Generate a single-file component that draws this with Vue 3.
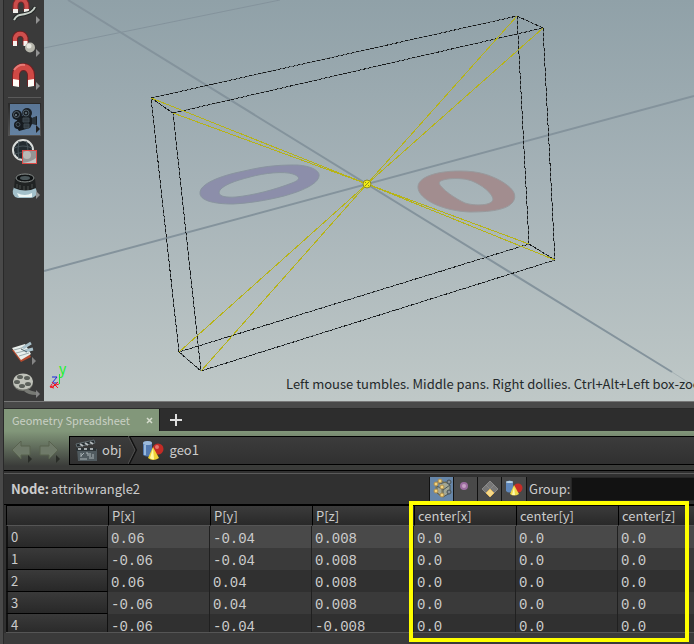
<script setup>
import { ref } from 'vue'

const columns = ['P[x]', 'P[y]', 'P[z]', 'center[x]', 'center[y]', 'center[z]']
const rows = [
  ['0.06', '-0.04', '0.008', '0.0', '0.0', '0.0'],
  ['-0.06', '-0.04', '0.008', '0.0', '0.0', '0.0'],
  ['0.06', '0.04', '0.008', '0.0', '0.0', '0.0'],
  ['-0.06', '0.04', '0.008', '0.0', '0.0', '0.0'],
  ['-0.06', '-0.04', '-0.008', '0.0', '0.0', '0.0'],
]
const group = ref('')

// Projected corners of the bounding box: back face, then front face
const back = [[107, 98], [473, 16], [485, 244], [135, 352]]
const front = [[129, 113], [499, 28], [511, 260], [157, 371]]
const center = [323, 184]
const corners = [...back, ...front]
const outline = (face) => face.map((p) => p.join(',')).join(' ')
</script>

<template>
  <div class="app">
    <div class="edge" aria-hidden="true"></div>
    <div class="workspace">
      <section class="scene">
        <nav class="toolbar" aria-label="View tools">
          <button class="tool cropped" type="button" aria-label="Snap to curve">
            <svg viewBox="0 6 40 27" width="40" height="27">
              <path d="M11.500 17V12a5 6 0 0 1 11 0V17" fill="none" stroke="#7d2427" stroke-width="6" />
              <path d="M11.500 16V12a5 6 0 0 1 11 0V16" fill="none" stroke="#cb4d4b" stroke-width="4" />
              <path d="M9 15h5v4H9zM20 15h5v4h-5z" fill="#f2efeb" />
              <path d="M10 26C13 20 17 21 21 20S29 18 31 13" fill="none" stroke="#242827" stroke-width="4" />
              <path d="M10 26C13 20 17 21 21 20S29 18 31 13" fill="none" stroke="#c9d1c9" stroke-width="2" />
              <path d="M32 22l4 4-4 4z" fill="#929292" />
            </svg>
          </button>
          <button class="tool" type="button" aria-label="Snap to point">
            <svg viewBox="0 0 40 33" width="40" height="33">
              <path d="M11 18V11a5.500 6 0 0 1 10.500 0V18" fill="none" stroke="#6f2023" stroke-width="6" />
              <path d="M11 18V11a5.500 6 0 0 1 10.500 0V18" fill="none" stroke="#cf4f4d" stroke-width="4" />
              <path d="M9 14h4v5h-4zM19.500 14h4v5h-4z" fill="#f6f2ee" />
              <circle cx="26" cy="20.500" r="5" fill="#b5b5ab" /><circle cx="25" cy="19" r="2.500" fill="#e6e6dd" />
              <path d="M32 22l4 4-4 4z" fill="#929292" />
            </svg>
          </button>
          <button class="tool" type="button" aria-label="Snapping">
            <svg viewBox="0 0 40 33" width="40" height="33">
              <path d="M12 26V15a7.500 8 0 0 1 15 0V26" fill="none" stroke="#6f2023" stroke-width="8" />
              <path d="M12 25V15a7.500 8 0 0 1 15 0V25" fill="none" stroke="#cf4945" stroke-width="6" />
              <path d="M10 10Q14 4 21 5" fill="none" stroke="#e67b76" stroke-width="2" />
              <path d="M9 19l6 1v7l-6-1zM24 20l6-1v7l-6 1z" fill="#fffdf8" />
              <path d="M32 22l4 4-4 4z" fill="#929292" />
            </svg>
          </button>
          <hr class="rule" />
          <button class="tool active" type="button" aria-label="View">
            <svg viewBox="0 0 40 33" width="40" height="33">
              <path d="M15 13l11-1 2 3 5-2v9l-5-1-2 4-11 3-4-6z" fill="#171c20" />
              <circle cx="13" cy="12" r="5" fill="#151b20" /><circle cx="23" cy="10" r="5" fill="#1b2126" />
              <circle cx="14" cy="22" r="4" fill="#161b20" />
              <circle cx="12.500" cy="11.500" r="3" fill="none" stroke="#57636c" />
              <circle cx="22" cy="10" r="3" fill="none" stroke="#4d5c66" />
              <circle cx="14" cy="21.500" r="2" fill="none" stroke="#46545d" />
              <circle cx="12" cy="12" r="1" fill="#7b8d97" /><circle cx="22" cy="10" r="1" fill="#6b7d87" />
              <path d="M19 15h6v4h-6zM20 21h5v4h-5z" fill="#333c43" stroke="#3e4b53" />
              <path d="M29 15v6M31 14v7" stroke="#3d4b54" />
              <path d="M32 22l4 4-4 4z" fill="#202020" />
            </svg>
          </button>
          <button class="tool" type="button" aria-label="Region zoom">
            <svg viewBox="0 0 40 33" width="40" height="33">
              <circle cx="19" cy="14" r="10" fill="#232c31" stroke="#d9dcda" stroke-width="2" />
              <path d="M10 12q9-4 18 0M10 18q8-3 15 0M15 5q-2 9 0 18M22 5q2 5 2 10" fill="none" stroke="#48545a" />
              <rect x="18.500" y="14.500" width="14" height="13" fill="#939494" stroke="#dc4b47" />
              <path d="M19 27q8-1 13-5v5z" fill="#c4c6c5" /><circle cx="23" cy="19" r="4" fill="#b8b8b5" />
            </svg>
          </button>
          <button class="tool" type="button" aria-label="Lens">
            <svg viewBox="0 0 40 33" width="40" height="33">
              <path d="M10 18Q6 27 14 29H27Q36 27 31 18z" fill="#a3c0ca" />
              <path d="M13 24q8 4 15 0v4H15z" fill="#edf6f5" />
              <path d="M11 10q0-5 10-5t10 5l1 9q-10 5-22 0z" fill="#202323" />
              <path d="M13 15v4M16 16v4M20 17v4M24 17v4M28 15v4" stroke="#4b504e" />
              <ellipse cx="21" cy="9" rx="9" ry="4" fill="#101314" stroke="#8b918f" />
              <ellipse cx="21" cy="9" rx="5" ry="2" fill="#4a5659" />
              <path d="M32 22l4 4-4 4z" fill="#929292" />
            </svg>
          </button>
          <span class="spacer"></span>
          <button class="tool" type="button" aria-label="Render">
            <svg viewBox="0 0 40 33" width="40" height="33">
              <path d="M8 15l13-4 6 11-10 5z" fill="#b64b2f" />
              <path d="M8 13l13-4 6 10-10 6z" fill="#e9efec" />
              <path d="M10 15l11-3M12 18l12-3M15 21l10-3" stroke="#9eacae" />
              <path d="M19 13l8-5M21 16l8-2" stroke="#a9c1ca" stroke-width="3" />
              <path d="M17 14l6 3" stroke="#4c6069" />
              <path d="M28 22l4 4-4 4z" fill="#858585" />
            </svg>
          </button>
          <button class="tool" type="button" aria-label="Flipbook">
            <svg viewBox="0 0 40 33" width="40" height="33">
              <path d="M23 21q4 2 9 3v3q-8 0-12-4z" fill="#777974" />
              <ellipse cx="19" cy="15" rx="10" ry="8" fill="#74766f" />
              <ellipse cx="19" cy="13.500" rx="10" ry="8" fill="#c0c2ba" />
              <g fill="#5c605b"><ellipse cx="16" cy="9" rx="3" ry="2" /><ellipse cx="23" cy="10" rx="3" ry="2" /><ellipse cx="13" cy="14" rx="3" ry="2" /><ellipse cx="24" cy="16" rx="3" ry="2" /><ellipse cx="18" cy="18" rx="3" ry="2" /></g>
              <path d="M32 22l4 4-4 4z" fill="#858585" />
            </svg>
          </button>
        </nav>

        <div class="viewport">
          <svg class="view" viewBox="0 0 650 401" preserveAspectRatio="xMidYMid slice" role="img" aria-label="Bounding box in the scene view">
            <g fill="none" stroke="#84939c">
              <path d="M0 48L236 0" stroke-width="1" />
              <path d="M0 271L650 96M24 0L628 372" stroke-width="2" />
              <path d="M628 372L650 386" stroke-width="1" opacity=".4" />
            </g>
            <path d="M156 193C156 184 175 176 200 171C225 165 240 165 253 165C268 166 276 171 275 176C274 184 258 191 240 196C220 201 205 203 189 204C168 204 156 200 156 193ZM176 190C180 185 190 181 206 177C220 173 240 171 249 174C257 177 256 180 248 183C230 190 210 195 192 197C178 198 173 195 176 190Z" fill="#8c8eaa" stroke="#89949f" fill-rule="evenodd" />
            <path d="M374 188C373 178 390 171 416 171C435 171 446 175 457 181C467 187 473 193 470 200C466 209 450 212 426 212C398 211 375 199 374 188ZM395 183C396 178 418 177 428 181C438 185 448 193 449 199C449 206 430 206 421 203C412 199 397 189 395 183Z" fill="#a28d8f" stroke="#98999c" fill-rule="evenodd" />
            <g v-for="tone in ['halo', 'dash']" :key="tone" class="wire" :class="tone">
              <polygon :points="outline(back)" />
              <polygon :points="outline(front)" />
              <line v-for="(p, i) in back" :key="i" :x1="p[0]" :y1="p[1]" :x2="front[i][0]" :y2="front[i][1]" />
            </g>
            <g class="wire" stroke="#b6b317">
              <line v-for="(p, i) in corners" :key="i" :x1="center[0]" :y1="center[1]" :x2="p[0]" :y2="p[1]" />
            </g>
            <circle cx="323" cy="184" r="4" fill="#f2ec12" stroke="#8b8a26" />
            <path d="M321 186l4-4M321 182l1 1M324 185l1 1" stroke="#8b8a26" />
          </svg>
          <svg class="axes" viewBox="0 0 30 36" width="30" height="36" aria-label="Axes">
            <path d="M12.500 31V21" stroke="#18e33b" fill="none" />
            <path d="M5 24h5l-5 6h5" stroke="#1720dc" fill="none" />
            <path d="M12 31L3 34M5 29l6 6M11 29l-6 6M5 31l-2 3 4 1" stroke="#f01723" fill="none" />
            <text x="12" y="21" fill="#18f229">y</text>
          </svg>
          <p class="hint">Left mouse tumbles. Middle pans. Right dollies. Ctrl+Alt+Left box-zooms.</p>
        </div>
      </section>

      <div class="splitter"></div>

      <section class="pane">
        <div class="tabs">
          <div class="tab">
            <button class="tab-name" type="button">Geometry Spreadsheet</button>
            <button class="close" type="button" aria-label="Close tab">
              <svg viewBox="0 0 7 7" width="7" height="7"><path d="M1 1l5 5M6 1L1 6" stroke="#d5dccd" stroke-width="1.500" /></svg>
            </button>
          </div>
          <button class="add" type="button" aria-label="New tab">
            <svg viewBox="0 0 12 12" width="12" height="12"><path d="M6 0v12M0 6h12" stroke="#dedede" stroke-width="2" /></svg>
          </button>
        </div>

        <div class="pathbar">
          <button class="history" type="button" aria-label="Back">
            <svg viewBox="0 0 24 26" width="24" height="26"><path d="M4 13L13 4v5h9v9h-9v4z" fill="#6f7a69" stroke="#59634f" /><path d="M20 18l4 4-4 4z" fill="#292c27" /></svg>
          </button>
          <button class="history" type="button" aria-label="Forward">
            <svg viewBox="0 0 24 26" width="24" height="26"><path d="M20 13L11 4v5H2v9h9v4z" fill="#6f7a69" stroke="#59634f" /><path d="M18 18l4 4-4 4z" fill="#292c27" /></svg>
          </button>
          <div class="path">
            <button class="crumb" type="button">
              <svg viewBox="0 0 24 24" width="24" height="24">
                <path d="M3 11h20v12H4z" fill="#505a5f" />
                <path d="M2 6l18-4 1 3-18 4z" fill="#242a2d" stroke="#616c70" />
                <path d="M6 6l3 2M11 5l3 2M16 4l3 2" stroke="#b3b9bb" stroke-width="2" />
                <path d="M2 10h20v3H2z" fill="#2c3336" />
                <path d="M4 11h3M10 11h3M16 11h3" stroke="#a4abad" stroke-width="2" />
                <path d="M7 15v4M10 15l-3 3M12 15h2v3M16 15v4M19 16v3M6 21h7M15 20h5" stroke="#aab3b6" fill="none" />
              </svg>
              <span>obj</span>
            </button>
            <svg class="divider" viewBox="0 0 10 28" width="10" height="28"><path d="M1 0l7 14-7 14" fill="none" stroke="#111" stroke-width="2" /><path d="M0 0l7 14-7 14" fill="none" stroke="#555" /></svg>
            <button class="crumb" type="button">
              <svg viewBox="0 0 24 24" width="24" height="24">
                <path d="M1 5q5-4 9 0v12q-4 3-9 0z" fill="#5279b0" /><ellipse cx="5.500" cy="5" rx="4.500" ry="2" fill="#9cbbdc" /><path d="M3 7v10" stroke="#98b9dc" stroke-width="2" />
                <circle cx="16" cy="11" r="5.500" fill="#c32b25" /><circle cx="15" cy="9" r="2" fill="#e4776d" />
                <path d="M11 9l6 11q-6 4-11 0z" fill="#efd337" /><path d="M11 10L8 20q2 2 4 1z" fill="#fff8a0" />
              </svg>
              <span>geo1</span>
            </button>
          </div>
        </div>

        <div class="sheet">
          <div class="node">
            <p class="name"><strong>Node:</strong><span>attribwrangle2</span></p>
            <div class="classes" role="group" aria-label="Attribute class">
              <button class="class on" type="button" aria-label="Points">
                <svg viewBox="0 0 24 24" width="24" height="24">
                  <path d="M9 7l7-2 4 3v8l-7 4-6-4V9l6 4v7M13 13l7-5" fill="#a1a696" stroke="#4b5657" />
                  <path d="M5 6l5-2 7 2M6 14l5 6M6 6v8M12 13v6" stroke="#79724f" fill="none" />
                  <g fill="#f3d37c" stroke="#ad8d4d"><circle cx="10" cy="4" r="2" /><circle cx="6" cy="7" r="2" /><circle cx="12" cy="10" r="2" /><circle cx="6" cy="14" r="2" /><circle cx="12" cy="18" r="2" /></g>
                  <g fill="#899298" stroke="#454f54"><circle cx="19" cy="5" r="2" /><circle cx="19" cy="15" r="2" /></g>
                </svg>
              </button>
              <button class="class" type="button" aria-label="Vertices">
                <svg viewBox="0 0 24 24" width="24" height="24"><circle cx="10" cy="9" r="3" fill="#c5a1c4" stroke="#9c6da0" stroke-width="2" /></svg>
              </button>
              <button class="class" type="button" aria-label="Primitives">
                <svg viewBox="0 0 24 24" width="24" height="24"><path d="M12 4l4 4-4 4-4-4z" fill="#777" stroke="#888" /><path d="M8 8l4 4-4 4-4-4zM16 8l4 4-4 4-4-4z" fill="#777" stroke="#888" /><path d="M12 12l4 4-4 4-4-4z" fill="#f6d989" stroke="#e5bc60" /></svg>
              </button>
              <button class="class" type="button" aria-label="Detail">
                <svg viewBox="0 0 24 24" width="24" height="24"><path d="M4 5q4-3 7 0v9q-4 3-7 0z" fill="#6088bc" /><ellipse cx="7.500" cy="5" rx="3.500" ry="1" fill="#bad3e5" /><circle cx="16" cy="11" r="4.500" fill="#c82c26" /><path d="M12 8l5 9q-5 3-9 0z" fill="#efd948" /><path d="M12 10l-2 8h3z" fill="#fffbae" /></svg>
              </button>
            </div>
            <label class="group-label" for="group">Group:</label>
            <input id="group" v-model="group" class="group" type="text" />
          </div>

          <div class="grid">
            <table>
              <thead>
                <tr><td class="corner"></td><th v-for="c in columns" :key="c" scope="col">{{ c }}</th></tr>
              </thead>
              <tbody>
                <tr v-for="(r, i) in rows" :key="i">
                  <th scope="row">{{ i }}</th>
                  <td v-for="(v, j) in r" :key="j">{{ v }}</td>
                </tr>
              </tbody>
            </table>
          </div>
          <div class="marker" aria-hidden="true"></div>
        </div>
        <div class="scrollbar"></div>
      </section>
    </div>
  </div>
</template>

<style>
body { margin: 0; background: #303030; }
</style>

<style scoped>
* { box-sizing: border-box; }
.app {
  display: flex;
  height: 100vh;
  min-height: 480px;
  overflow: hidden;
  background: #303030;
  color: #ccc;
  font: 13px/20px "Noto Sans CJK SC", "Noto Sans", sans-serif;
}
button { display: block; margin: 0; padding: 0; border: 0; background: none; color: inherit; font: inherit; }
svg { display: block; flex: none; }
p { margin: 0; }
.edge { flex: none; width: 4px; background: #494949; border-right: 1px solid #292929; }
.workspace { flex: 1; min-width: 0; display: flex; flex-direction: column; }

.scene { flex: 1; min-height: 0; display: flex; }
.toolbar { flex: none; width: 40px; display: flex; flex-direction: column; background: #3a3a3a; overflow: hidden; }
.tool { flex: none; width: 40px; height: 33px; }
.tool.cropped { height: 27px; }
.tool.active {
  background: linear-gradient(#5a7696, #6482a2) 6px 1px / 30px 31px no-repeat, linear-gradient(#292929, #555) 4px 0 / 33px 33px no-repeat;
}
.rule { flex: none; width: 33px; height: 1px; margin: 4px 0 5px 4px; border: 0; background: #5a5a5a; }
.spacer { flex: 1; }
.viewport {
  position: relative;
  flex: 1;
  min-width: 0;
  overflow: hidden;
  background: linear-gradient(#90a1a8, #a5b2b7 45%, #bfc8c7);
}
.view { width: 100%; height: 100%; }
.wire { fill: none; stroke-width: 1px; shape-rendering: crispEdges; }
.wire.halo { stroke: #657075; }
.wire.dash { stroke: #16191a; stroke-dasharray: 3 2; }
.axes { position: absolute; left: 3px; bottom: 12px; }
.axes text { font: 14px "Noto Sans CJK SC", sans-serif; }
.hint {
  position: absolute;
  left: 242px;
  bottom: 7px;
  color: #24292a;
  white-space: nowrap;
}

.splitter { flex: none; height: 8px; background: #494949; border-top: 1px solid #777; border-bottom: 1px solid #292929; }

.pane { flex: none; background: #303030; }
.tabs { display: flex; height: 22px; background: #2d2d2d; }
.tab { display: flex; align-items: center; justify-content: space-between; width: 155px; padding: 0 6px 0 8px; background: #82977a; }
.tab-name { color: #c9d0c4; font-size: 11px; }
.add { display: flex; align-items: center; padding-left: 10px; border-left: 1px solid #1b1b1b; }
.pathbar {
  display: flex;
  align-items: center;
  height: 40px;
  padding: 5px 0 6px 4px;
  gap: 6px;
  background: linear-gradient(#82977a, #3a3b39 90%);
  border-bottom: 1px solid #000;
}
.path {
  flex: 1;
  display: flex;
  align-items: center;
  height: 29px;
  margin-left: 1px;
  background: linear-gradient(#3c3c3c, #303030);
  border: 1px solid #000;
  border-right: 0;
}
.crumb { display: flex; align-items: center; gap: 4px; padding: 0 4px; }
.divider { margin-left: 2px; }

.sheet { position: relative; margin-top: 2px; border-top: 1px solid #5a5a5a; }
.node { display: flex; align-items: center; height: 31px; padding-left: 7px; border-bottom: 1px solid #000; background: #303030; }
.name { display: flex; gap: 2px; flex: 0 1 418px; min-width: 140px; }
strong { font-weight: 700; }
.classes { display: flex; border: solid #111; border-width: 0 1px; }
.class { width: 24px; height: 24px; background: #494949; border-right: 1px solid #111; }
.class:last-child { border-right: 0; }
.class.on { background: #6786a8; }
.group-label { margin: 0 1px 0 2px; }
.group { flex: 1; min-width: 40px; height: 24px; padding: 0 4px; border: 1px solid #262626; border-right: 0; background: #121212; color: #ccc; font: inherit; }
.grid { height: 128px; margin-left: 2px; overflow: hidden; border-top: 1px solid #000; border-bottom: 1px solid #555; }
table { width: 714px; border-collapse: separate; border-spacing: 0; table-layout: fixed; }
th, td { height: 22px; padding: 0 3px; text-align: left; font-weight: 400; line-height: 18px; white-space: nowrap; }
thead th, .corner { height: 20px; padding: 0 3px; background: linear-gradient(#3b3b3b, #292929); border-left: 1px solid #000; border-bottom: 1px solid #555; }
tbody th { background: linear-gradient(#3a3a3a, #282828); border-left: 2px solid #111; border-bottom: 1px solid #000; border-right: 1px solid #111; }
tbody td { background: #303030; border-right: 1px solid #202020; font-family: "Liberation Mono", monospace; font-size: 14px; padding-top: 3px; }
tbody tr:first-child td { background: #494949; }
tbody tr:nth-child(even) td { background: #3a3a3a; }
.marker { position: absolute; left: 405px; top: 27px; width: 280px; height: 141px; border: 4px solid #ff0; }
.scrollbar { height: 11px; background: #3a3a3a; }
</style>
